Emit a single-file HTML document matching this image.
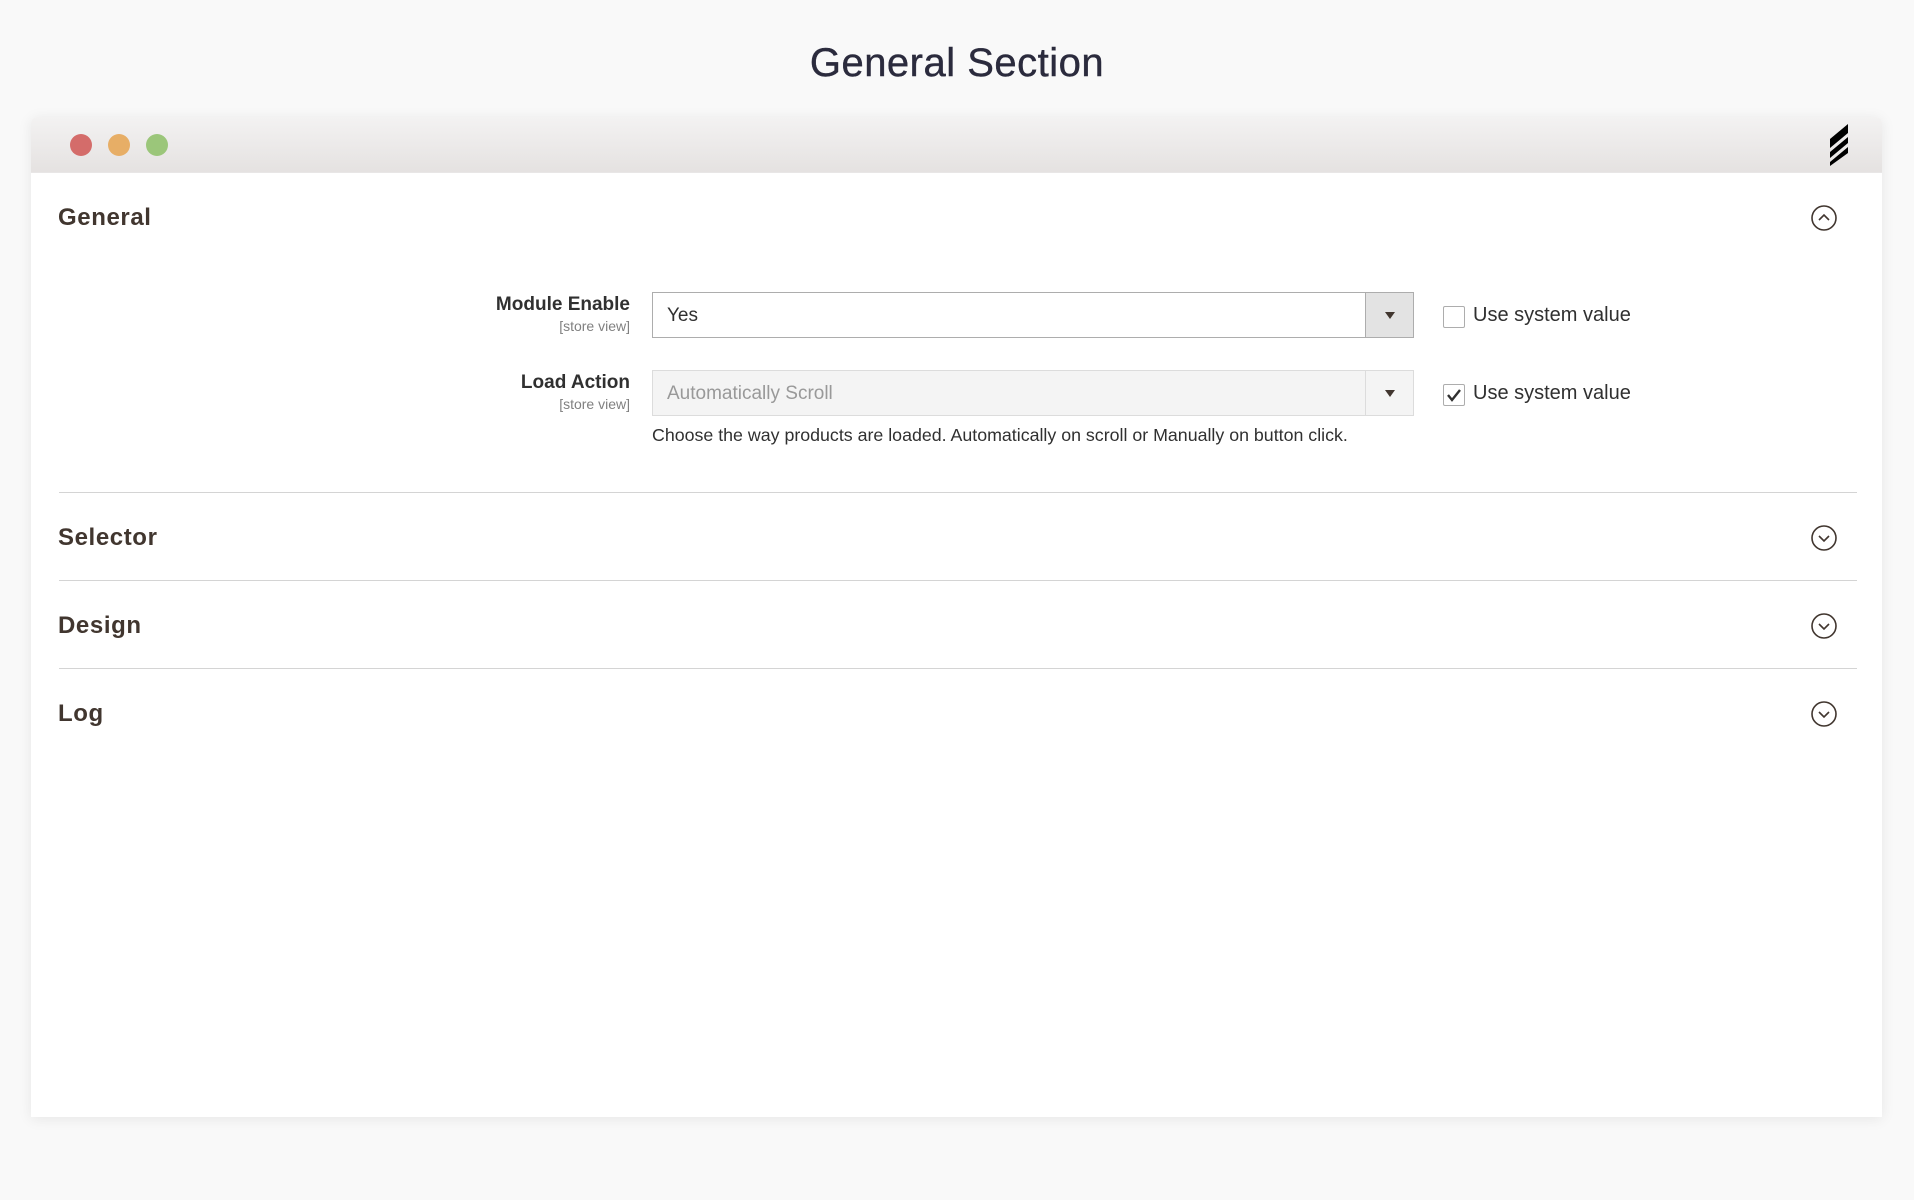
<!DOCTYPE html>
<html><head><meta charset="utf-8"><style>
*{box-sizing:border-box;margin:0;padding:0}
body{width:1914px;height:1200px;background:#f9f9f9;font-family:"Liberation Sans",sans-serif;position:relative;overflow:hidden}
.abs{position:absolute}
h1{position:absolute;left:0;width:1914px;top:41px;text-align:center;font-size:40px;font-weight:normal;color:#2b2b3d;letter-spacing:0.5px;-webkit-text-stroke:0.4px #2b2b3d}
.win{position:absolute;left:31px;top:117px;width:1851px;height:1000px;background:#fff;box-shadow:0 2px 14px rgba(0,0,0,0.08);border-radius:6px 6px 0 0;overflow:hidden}
.bar{position:absolute;left:0;top:0;width:100%;height:56px;background:linear-gradient(#f3f2f2,#e5e2e1);border-bottom:1px solid #e8e6e6}
.dot{position:absolute;top:17px;width:22px;height:22px;border-radius:50%}
.sec{position:absolute;left:27px;font-size:24px;font-weight:bold;color:#41362f;letter-spacing:0.6px}
.circ{position:absolute;left:1780px;width:26px;height:26px}
.hr{position:absolute;left:28px;width:1798px;height:1px;background:#d4d4d4}
.lab{position:absolute;right:1252px;text-align:right;color:#303030;font-weight:bold;font-size:19px}
.sv{position:absolute;right:1252px;font-size:14px;color:#808080}
.sel{position:absolute;left:621px;width:762px;height:46px;border:1px solid #adadad;font-size:19px;padding:12px 14px}
.sel .btn{position:absolute;right:0;top:0;width:48px;height:44px;border-left:1px solid #adadad;background:#e3e3e3}
.sel .btn:after{content:"";position:absolute;left:19px;top:19px;border-left:5px solid transparent;border-right:5px solid transparent;border-top:7px solid #41362f}
.cb{position:absolute;left:1412px;width:22px;height:22px;border:1px solid #adadad;border-radius:2px;background:#fff}
.cbt{position:absolute;left:1442px;font-size:20px;color:#303030}
</style></head><body>
<h1>General Section</h1>
<div class="win">
 <div class="bar">
  <div class="dot" style="left:39px;background:#d46c6a"></div>
  <div class="dot" style="left:77px;background:#e7ae66"></div>
  <div class="dot" style="left:115px;background:#9bc67a"></div>
  <svg class="abs" style="left:1797px;top:7px" width="22" height="42" viewBox="0 0 22 42"><path d="M20 0L2 15v9L20 9zM20 13L2 28v6L20 19zM20 23L2 38v4L20 29z" fill="#000"/></svg>
 </div>
 <div class="sec" style="top:87px">General</div>
 <svg class="circ" style="top:88px" viewBox="0 0 26 26"><circle cx="13" cy="13" r="12" fill="none" stroke="#41362f" stroke-width="1.6"/><path d="M8 15l5-5 5 5" fill="none" stroke="#41362f" stroke-width="1.6"/></svg>

 <div class="lab" style="top:177px">Module Enable</div>
 <div class="sv" style="top:201px">[store view]</div>
 <div class="sel" style="top:175px;color:#303030">Yes<div class="btn"></div></div>
 <div class="cb" style="top:189px"></div>
 <div class="cbt" style="top:187px">Use system value</div>

 <div class="lab" style="top:255px">Load Action</div>
 <div class="sv" style="top:279px">[store view]</div>
 <div class="sel" style="top:253px;background:#f4f4f4;border-color:#dcdcdc;color:#999">Automatically Scroll<div class="btn" style="background:#f4f4f4;border-color:#dcdcdc"></div></div>
 <div class="cb" style="top:267px"><svg width="20" height="20" viewBox="0 0 20 20" style="position:absolute;left:0;top:0"><path d="M4 10l4 5 8-10" fill="none" stroke="#303030" stroke-width="2.4"/></svg></div>
 <div class="cbt" style="top:265px">Use system value</div>
 <div class="abs" style="left:621px;top:308px;font-size:17.8px;color:#303030">Choose the way products are loaded. Automatically on scroll or Manually on button click.</div>

 <div class="hr" style="top:375px"></div>
 <div class="sec" style="top:407px">Selector</div>
 <svg class="circ" style="top:408px" viewBox="0 0 26 26"><circle cx="13" cy="13" r="12" fill="none" stroke="#41362f" stroke-width="1.6"/><path d="M8 11l5 5 5-5" fill="none" stroke="#41362f" stroke-width="1.6"/></svg>
 <div class="hr" style="top:463px"></div>
 <div class="sec" style="top:495px">Design</div>
 <svg class="circ" style="top:496px" viewBox="0 0 26 26"><circle cx="13" cy="13" r="12" fill="none" stroke="#41362f" stroke-width="1.6"/><path d="M8 11l5 5 5-5" fill="none" stroke="#41362f" stroke-width="1.6"/></svg>
 <div class="hr" style="top:551px"></div>
 <div class="sec" style="top:583px">Log</div>
 <svg class="circ" style="top:584px" viewBox="0 0 26 26"><circle cx="13" cy="13" r="12" fill="none" stroke="#41362f" stroke-width="1.6"/><path d="M8 11l5 5 5-5" fill="none" stroke="#41362f" stroke-width="1.6"/></svg>
</div>
</body></html>
